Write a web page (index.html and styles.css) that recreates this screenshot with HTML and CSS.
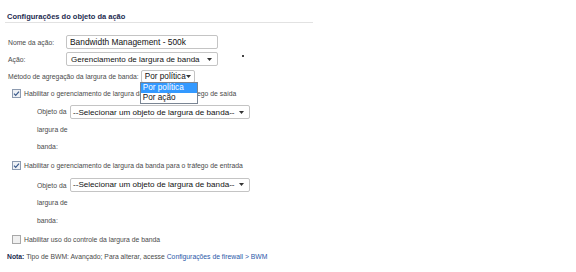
FILE: index.html
```html
<!DOCTYPE html>
<html lang="pt">
<head>
    <meta charset="UTF-8">
    <title>Configurações do objeto da ação</title>
    <link rel="stylesheet" href="styles.css">
</head>
<body>
    <div class="panel">
        <h3 class="title">Configurações do objeto da ação</h3>

        <div class="row first">
            <span class="label">Nome da ação:</span>
            <div class="field input">Bandwidth Management - 500k</div>
        </div>

        <div class="row">
            <span class="label">Ação:</span>
            <div class="field select">
                <span>Gerenciamento de largura de banda</span>
                <svg class="arrow" width="5" height="3" viewBox="0 0 5 3"><path d="M0 0h5L2.5 3z" fill="#333"/></svg>
            </div>
            <span class="cursor"></span>
        </div>

        <div class="row method">
            <span class="label-inline">Método de agregação da largura de banda:</span>
            <div class="dropdown">
                <div class="field select small">
                    <span>Por política</span>
                    <svg class="arrow" width="5" height="3" viewBox="0 0 5 3"><path d="M0 0h5L2.5 3z" fill="#333"/></svg>
                </div>
                <ul class="menu">
                    <li class="active">Por política</li>
                    <li>Por ação</li>
                </ul>
            </div>
        </div>

        <label class="check">
            <svg class="box" width="9" height="9" viewBox="0 0 9 9">
                <rect x="0.5" y="0.5" width="8" height="8" fill="#eef1f5" stroke="#8d9bb0"/>
                <path d="M2 4.6l1.7 1.7L7 2.6" fill="none" stroke="#3a5a8c" stroke-width="1.2"/>
            </svg>
            <span class="check-text">Habilitar o gerenciamento de largura da banda para o tráfego de saída</span>
        </label>
        <div class="object">
            <span class="obj-label">Objeto da largura de banda:</span>
            <div class="field select wide">
                <span>--Selecionar um objeto de largura de banda--</span>
                <svg class="arrow" width="5" height="3" viewBox="0 0 5 3"><path d="M0 0h5L2.5 3z" fill="#333"/></svg>
            </div>
        </div>

        <label class="check">
            <svg class="box" width="9" height="9" viewBox="0 0 9 9">
                <rect x="0.5" y="0.5" width="8" height="8" fill="#eef1f5" stroke="#8d9bb0"/>
                <path d="M2 4.6l1.7 1.7L7 2.6" fill="none" stroke="#3a5a8c" stroke-width="1.2"/>
            </svg>
            <span class="check-text">Habilitar o gerenciamento de largura da banda para o tráfego de entrada</span>
        </label>
        <div class="object second">
            <span class="obj-label">Objeto da largura de banda:</span>
            <div class="field select wide">
                <span>--Selecionar um objeto de largura de banda--</span>
                <svg class="arrow" width="5" height="3" viewBox="0 0 5 3"><path d="M0 0h5L2.5 3z" fill="#333"/></svg>
            </div>
        </div>

        <label class="check">
            <svg class="box" width="9" height="9" viewBox="0 0 9 9">
                <rect x="0.5" y="0.5" width="8" height="8" fill="#f0f0f0" stroke="#a8a8a8"/>
            </svg>
            <span class="check-text">Habilitar uso do controle da largura de banda</span>
        </label>

        <p class="note"><b>Nota:</b> Tipo de BWM: Avançado; Para alterar, acesse <a href="#">Configurações de firewall &gt; BWM</a></p>
    </div>
</body>
</html>
```

FILE: styles.css
```css
body {
    margin: 0;
    background: #fff;
    font-family: "Liberation Sans", Arial, sans-serif;
    font-size: 6.8px;
    color: #4a4a4a;
}
.panel {
    padding: 12px 0 0 5px;
    width: 308px;
}
.title {
    margin: 0;
    padding: 0 0 1px 2px;
    font-size: 7.5px;
    line-height: 9px;
    font-weight: bold;
    color: #1d2b50;
    border-bottom: 1px solid #e2e2e2;
}
.row {
    display: flex;
    align-items: center;
    margin-top: 3px;
    padding-left: 3px;
    position: relative;
}
.row.first {
    margin-top: 12px;
}
.row.method {
    margin-top: 4px;
}
.label {
    width: 58px;
}
.label-inline {
    margin-right: 2px;
}
.field {
    box-sizing: border-box;
    height: 14px;
    border: 1px solid #c4c4c4;
    border-radius: 2px;
    background: #fff;
    font-size: 8.4px;
    color: #111;
    display: flex;
    align-items: center;
    padding: 0 3px;
    white-space: nowrap;
}
.input {
    width: 152px;
}
.select {
    width: 152px;
    justify-content: space-between;
    padding: 0 5px 0 4px;
    font-size: 8px;
}
.select.small {
    width: 54px;
    height: 13px;
    padding: 0 4px 0 3px;
    font-size: 8.2px;
}
.select.wide {
    width: 180px;
    font-size: 8.1px;
    padding: 0 5px 0 2px;
}
.arrow {
    flex: none;
}
.cursor {
    position: absolute;
    left: 237px;
    top: 3px;
    width: 2px;
    height: 2px;
    background: #444;
}
.dropdown {
    position: relative;
}
.menu {
    position: absolute;
    left: -1px;
    top: 12px;
    width: 56px;
    margin: 0;
    padding: 0;
    list-style: none;
    background: #fff;
    border: 1px solid #7a8593;
    font-size: 8.2px;
    color: #111;
    z-index: 2;
}
.menu li {
    height: 10px;
    line-height: 10px;
    padding-left: 2px;
}
.menu li.active {
    background: #3399ff;
    color: #fff;
}
.check {
    display: flex;
    align-items: center;
    height: 12px;
    margin-top: 4px;
    padding-left: 7px;
}
.box {
    margin-right: 3px;
    flex: none;
}
.object {
    display: flex;
    align-items: flex-start;
    padding-left: 32px;
    margin-top: 4px;
    margin-bottom: 1px;
}
.object.second {
    margin-top: 5px;
    margin-bottom: 0;
}
.obj-label {
    width: 33px;
    line-height: 17.5px;
}
.object .field {
    margin-top: 2px;
}
.object.second .field {
    margin-top: 1px;
}
.note {
    margin: 7px 0 0 2px;
    line-height: 10px;
    white-space: nowrap;
}
.note b {
    color: #1d2b50;
}
.note a {
    color: #2a58a8;
    text-decoration: none;
}
```
